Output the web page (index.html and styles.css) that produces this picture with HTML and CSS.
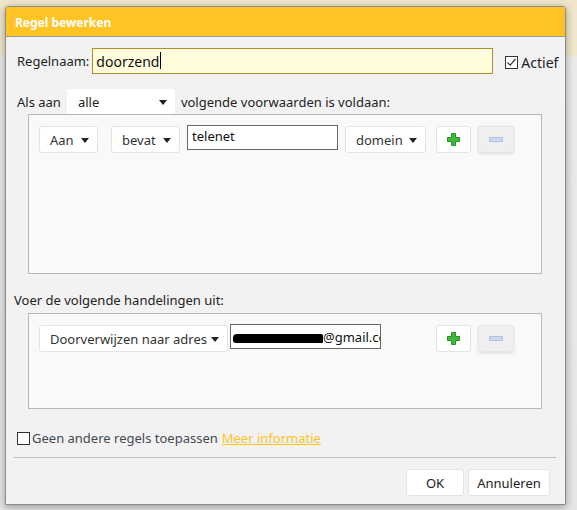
FILE: index.html
```html
<!DOCTYPE html>
<html lang="nl">
<head>
<meta charset="utf-8">
<title>Regel bewerken</title>
<link rel="stylesheet" href="styles.css">
</head>
<body>
<div class="dialog">
  <div class="titlebar">Regel bewerken</div>
  <div class="content">
    <div class="row-name">
      <span class="label">Regelnaam:</span>
      <div class="name-input">doorzend<span class="caret"></span></div>
      <label class="check checked"><span class="box"><svg width="11" height="11" viewBox="0 0 11 11"><path d="M1.5 5.5 L4.2 8.2 L9.5 2" fill="none" stroke="#333" stroke-width="1.2"/></svg></span>Actief</label>
    </div>
    <div class="row-cond">
      <span class="label">Als aan</span>
      <div class="select wide">alle<svg class="arrow" width="8" height="5" viewBox="0 0 8 5"><path d="M0 0 H8 L4 5 Z" fill="#222"/></svg></div>
      <span class="label">volgende voorwaarden is voldaan:</span>
    </div>
    <div class="panel panel-cond">
      <div class="rule-row">
        <div class="btn dd w-aan">Aan<svg class="arrow" width="8" height="5" viewBox="0 0 8 5"><path d="M0 0 H8 L4 5 Z" fill="#222"/></svg></div>
        <div class="btn dd w-bevat">bevat<svg class="arrow" width="8" height="5" viewBox="0 0 8 5"><path d="M0 0 H8 L4 5 Z" fill="#222"/></svg></div>
        <div class="text-input">telenet</div>
        <div class="btn dd w-domein">domein<svg class="arrow" width="8" height="5" viewBox="0 0 8 5"><path d="M0 0 H8 L4 5 Z" fill="#222"/></svg></div>
        <div class="btn icon plus"><svg width="13" height="13" viewBox="0 0 13 13"><path d="M4.5 0.5 H8.5 V4.5 H12.5 V8.5 H8.5 V12.5 H4.5 V8.5 H0.5 V4.5 H4.5 Z" fill="#3dbb3d" stroke="#2a8f2a" stroke-width="1"/></svg></div>
        <div class="btn icon minus disabled"><svg width="14" height="5" viewBox="0 0 14 5"><rect x="0.5" y="0.5" width="13" height="4" fill="#c9d8ec" stroke="#b3c6df" stroke-width="1"/></svg></div>
      </div>
    </div>
    <div class="section-label">Voer de volgende handelingen uit:</div>
    <div class="panel panel-act">
      <div class="rule-row">
        <div class="btn dd w-fwd">Doorverwijzen naar adres<svg class="arrow" width="8" height="5" viewBox="0 0 8 5"><path d="M0 0 H8 L4 5 Z" fill="#222"/></svg></div>
        <div class="text-input email"><span class="redact"></span>@gmail.com</div>
        <div class="btn icon plus push"><svg width="13" height="13" viewBox="0 0 13 13"><path d="M4.5 0.5 H8.5 V4.5 H12.5 V8.5 H8.5 V12.5 H4.5 V8.5 H0.5 V4.5 H4.5 Z" fill="#3dbb3d" stroke="#2a8f2a" stroke-width="1"/></svg></div>
        <div class="btn icon minus disabled"><svg width="14" height="5" viewBox="0 0 14 5"><rect x="0.5" y="0.5" width="13" height="4" fill="#c9d8ec" stroke="#b3c6df" stroke-width="1"/></svg></div>
      </div>
    </div>
    <div class="row-stop">
      <span class="box"></span><span class="stop-text">Geen andere regels toepassen</span><a class="more" href="#">Meer informatie</a>
    </div>
    <div class="separator"></div>
    <div class="footer">
      <div class="btn fbtn ok">OK</div>
      <div class="btn fbtn cancel">Annuleren</div>
    </div>
  </div>
</div>
</body>
</html>
```

FILE: styles.css
```css
* { box-sizing: border-box; }
html, body { margin: 0; padding: 0; }
body {
  width: 577px;
  height: 510px;
  overflow: hidden;
  font-family: "Noto Sans", "Open Sans", sans-serif;
  font-size: 13px;
  color: #222;
  background: linear-gradient(to bottom, #efe6cc 0, #efe6cc 56px, #ebebeb 56px, #e6e6e6 100%);
  padding: 6px 0 0 5px;
}
.dialog {
  width: 561px;
  height: 499px;
  background: #f2f2f2;
  border: 1px solid #8c8c8c;
  border-radius: 3px 3px 0 0;
  box-shadow: 0 2px 8px rgba(0,0,0,0.35);
  display: flex;
  flex-direction: column;
}
.titlebar {
  height: 30px;
  background: #ffc323;
  border-bottom: 1px solid #999;
  color: #fff;
  font-weight: bold;
  font-size: 12px;
  padding: 7px 0 0 9px;
  border-radius: 2px 2px 0 0;
}
.content {
  padding: 11px 0 0 8px;
  flex: 1;
}
.row-name {
  display: flex;
  align-items: center;
  height: 26px;
  padding-left: 3px;
}
.label { white-space: nowrap; }
.name-input {
  margin-left: 3px;
  width: 401px;
  height: 26px;
  background: #fffddb;
  border: 1px solid #b08d2a;
  padding: 3px 0 0 3px;
  font-size: 14px;
  color: #111;
  display: flex;
}
.caret {
  display: inline-block;
  width: 1px;
  height: 17px;
  background: #000;
  margin-left: 1px;
}
.check {
  display: flex;
  align-items: center;
  margin-left: 12px;
  font-size: 14px;
  margin-top: 2px;
}
.box {
  width: 13px;
  height: 13px;
  border: 1px solid #333;
  background: #fff;
  display: inline-flex;
  align-items: center;
  justify-content: center;
  margin-right: 3px;
}
.row-cond {
  display: flex;
  align-items: center;
  margin-top: 15px;
  height: 25px;
  padding-left: 3px;
}
.select {
  position: relative;
  height: 25px;
  background: #fff;
  border-radius: 3px;
  display: flex;
  align-items: center;
  padding-left: 11px;
}
.select.wide { width: 108px; margin: 0 6px 0 6px; }
.arrow { position: absolute; right: 8px; top: 50%; margin-top: -2px; }
.panel {
  margin-left: 14px;
  width: 514px;
  background: #f9f9f9;
  border: 1px solid #b8b8b8;
  padding: 11px 0 0 10px;
}
.panel-cond { height: 160px; }
.panel-act { height: 96px; }
.rule-row {
  display: flex;
  align-items: flex-start;
}
.btn {
  position: relative;
  height: 27px;
  background: #fff;
  border: 1px solid #e4e4e4;
  border-radius: 3px;
  display: flex;
  align-items: center;
  color: #333;
}
.dd { padding-left: 10px; }
.w-aan { width: 59px; }
.w-bevat { width: 69px; margin-left: 13px; }
.w-domein { width: 81px; margin-left: 7px; }
.w-fwd { width: 189px; }
.text-input {
  margin-top: -1px;
  margin-left: 7px;
  width: 151px;
  height: 25px;
  background: #fff;
  border: 1px solid #666;
  padding: 1px 0 0 4px;
  font-size: 13px;
  color: #111;
  white-space: nowrap;
  overflow: hidden;
}
.email { margin-left: 2px; padding-left: 2px; display: flex; align-items: center; padding-top: 0; }
.redact {
  display: inline-block;
  width: 90px;
  height: 9px;
  background: #000;
  border-radius: 4px 2px 1px 3px;
  margin-top: 4px;
  flex: none;
}
.icon { justify-content: center; width: 35px; margin-left: 10px; }
.plus.push { margin-left: 55px; }
.minus { width: 36px; margin-left: 7px; }
.disabled {
  background: #efefef;
  border-color: #e6e6e6;
  box-shadow: 0 1px 3px rgba(0,0,0,0.12);
}
.section-label {
  margin-top: 17px;
  height: 22px;
  line-height: 18px;
}
.row-stop {
  display: flex;
  align-items: center;
  margin-top: 21px;
  padding-left: 3px;
  height: 16px;
}
.row-stop .box { margin-right: 2px; }
.stop-text { color: #444a55; }
.more {
  margin-left: 4px;
  color: #ffc323;
  text-decoration: underline;
}
.separator {
  margin-top: 11px;
  width: 542px;
  height: 1px;
  background: #bdbdbd;
}
.footer {
  display: flex;
  justify-content: flex-end;
  margin-top: 11px;
  padding-right: 15px;
  gap: 4px;
}
.fbtn {
  height: 27px;
  justify-content: center;
  font-size: 13px;
  color: #222;
}
.ok { width: 58px; }
.cancel { width: 82px; }
```
